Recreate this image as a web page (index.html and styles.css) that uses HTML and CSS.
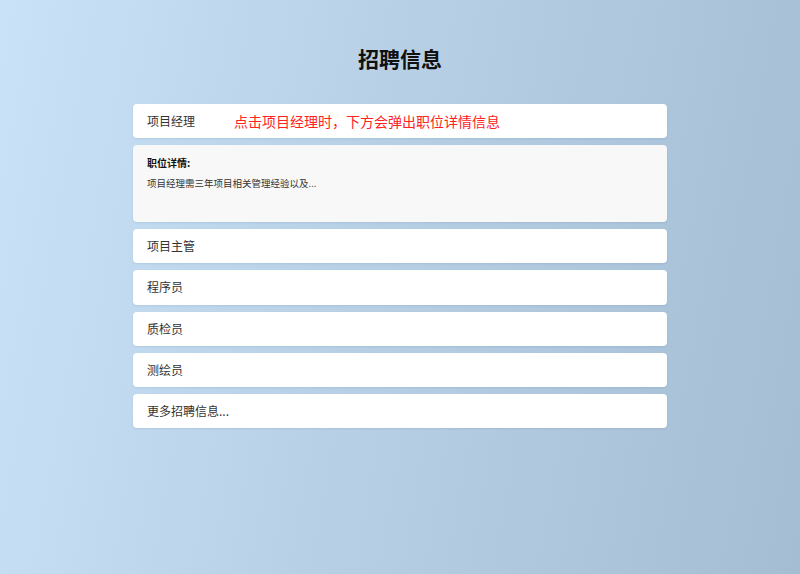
FILE: index.html
```html
<!DOCTYPE html>
<html lang="zh-CN">
<head>
<meta charset="utf-8">
<title>招聘信息</title>
<link rel="stylesheet" href="styles.css">
</head>
<body>
<div class="page">
  <h1 class="title">招聘信息</h1>
  <ul class="jobs">
    <li class="job job-active"><span class="job-name">项目经理</span><span class="note">点击项目经理时，下方会弹出职位详情信息</span></li>
    <li class="detail">
      <div class="detail-title">职位详情:</div>
      <div class="detail-text">项目经理需三年项目相关管理经验以及...</div>
    </li>
    <li class="job"><span class="job-name">项目主管</span></li>
    <li class="job"><span class="job-name">程序员</span></li>
    <li class="job"><span class="job-name">质检员</span></li>
    <li class="job"><span class="job-name">测绘员</span></li>
    <li class="job"><span class="job-name">更多招聘信息...</span></li>
  </ul>
</div>
</body>
</html>
```
FILE: styles.css
```css
html, body {
  margin: 0;
  padding: 0;
  height: 100%;
}
body {
  background: linear-gradient(100deg, #c9e2f8 0%, #b8d0e6 45%, #a5bdd3 100%);
  font-family: "Microsoft YaHei", "Noto Sans CJK SC", "Noto Sans", sans-serif;
  color: #222;
}
.page {
  width: 534px;
  margin: 0 auto;
  padding-top: 43px;
}
.title {
  margin: 0 0 31px;
  text-align: center;
  font-size: 21px;
  line-height: 30px;
  font-weight: 700;
  color: #111;
}
.jobs {
  list-style: none;
  margin: 0;
  padding: 0;
  display: flex;
  flex-direction: column;
  gap: 6.85px;
}
.job {
  display: flex;
  align-items: center;
  background: #fff;
  border-radius: 4px;
  padding: 10px 14px;
  height: 14.4px;
  font-size: 12px;
  line-height: 14.4px;
  color: #333;
  box-shadow: 0 1px 2px rgba(60, 90, 120, 0.12);
}
.note {
  margin-left: 39px;
  font-size: 14px;
  color: #ff2222;
}
.detail {
  background: #f8f8f8;
  border-radius: 4px;
  padding: 11px 14px 0;
  height: 66px;
  box-shadow: 0 1px 2px rgba(60, 90, 120, 0.12);
}
.detail-title {
  font-size: 10px;
  font-weight: 700;
  line-height: 14px;
  color: #111;
}
.detail-text {
  margin-top: 6px;
  font-size: 9.5px;
  line-height: 14px;
  color: #333;
}
```
